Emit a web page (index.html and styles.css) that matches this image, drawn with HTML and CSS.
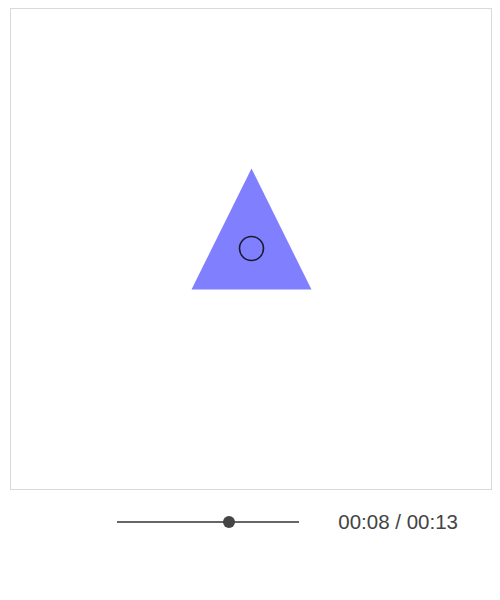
FILE: index.html
```html
<!DOCTYPE html>
<html>
<head>
<meta charset="utf-8">
<link rel="stylesheet" href="styles.css">
</head>
<body>
<div class="player">
  <div class="stage">
    <svg class="canvas" width="480" height="480" viewBox="0 0 480 480">
      <polygon points="240.5,159.5 180.5,280.5 300.5,280.5" fill="#8080ff"/>
      <circle cx="240.5" cy="239.5" r="12" fill="none" stroke="#1a1a2e" stroke-width="1.6"/>
    </svg>
  </div>
  <div class="controls">
    <div class="slider">
      <div class="track"></div>
      <div class="thumb" style="left: 61.5%"></div>
    </div>
    <div class="time">00:08 / 00:13</div>
  </div>
</div>
</body>
</html>
```

FILE: styles.css
```css
html, body {
  background: #fff;
}
body {
  margin: 8px 0 0 10px;
  font-family: "Liberation Sans", Arial, sans-serif;
}
.player {
  width: 482px;
}
.stage {
  width: 480px;
  height: 480px;
  border: 1px solid #d9d9d9;
}
.canvas {
  display: block;
}
.controls {
  display: flex;
  align-items: center;
  justify-content: flex-end;
  gap: 39px;
  margin-top: 20px;
  padding-right: 34px;
  height: 23px;
}
.slider {
  position: relative;
  width: 182px;
  height: 12px;
}
.track {
  position: absolute;
  left: 0;
  right: 0;
  top: 5px;
  height: 2px;
  background: #666;
}
.thumb {
  position: absolute;
  top: 0;
  width: 12px;
  height: 12px;
  margin-left: -6px;
  border-radius: 50%;
  background: #444;
}
.time {
  font-size: 20.5px;
  line-height: 23px;
  color: #444;
  white-space: nowrap;
}
```
